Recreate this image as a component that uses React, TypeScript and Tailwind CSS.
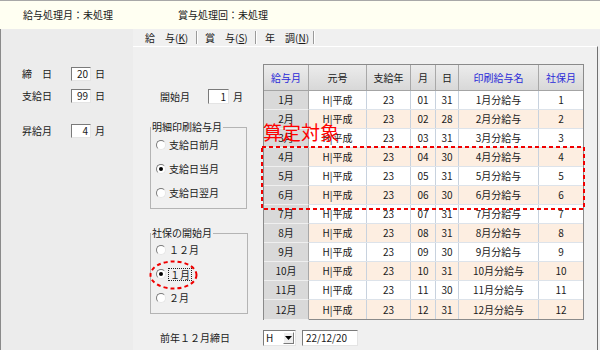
import React from "react";

const days = [31, 28, 31, 30, 31, 30, 31, 31, 30, 31, 30, 31];

function Field({ value, className }: { value: string; className: string }) {
  return (
    <div
      className={
        "h-[14px] bg-white border border-t-[#7a7a7a] border-l-[#7a7a7a] border-r-[#e4e4e4] border-b-[#e4e4e4] flex items-center justify-end pr-[2px] " +
        className
      }
    >
      {value}
    </div>
  );
}

function Radio({ label, checked, focus }: { label: string; checked?: boolean; focus?: boolean }) {
  return (
    <div className="flex items-center h-[16px] pl-[5px]">
      <span className="w-[10px] h-[10px] rounded-full bg-white border border-t-[#7a7a7a] border-l-[#7a7a7a] border-r-[#e6e6e6] border-b-[#e6e6e6] flex items-center justify-center">
        {checked && <span className="w-[4px] h-[4px] rounded-full bg-black" />}
      </span>
      {focus ? (
        <span className="ml-[2px] px-[1px] border border-dotted border-[#222] leading-[11px]">{label}</span>
      ) : (
        <span className="ml-[3px]">{label}</span>
      )}
    </div>
  );
}

function Tab({ a, b, k, className }: { a: string; b: string; k: string; className: string }) {
  return (
    <div className={"flex items-center h-full " + className}>
      <span>
        {a}　{b}(<span className="underline">{k}</span>)
      </span>
    </div>
  );
}

function Sep() {
  return <div className="w-[2px] h-[13px] border-l border-[#9a9a9a] border-r border-r-white" />;
}

export default function App() {
  return (
    <div className="relative w-[600px] h-[350px] overflow-hidden bg-[#f0f0f0] text-[10px] leading-[12px] text-[#1a1a1a] font-['Noto_Sans_CJK_JP',sans-serif]">
      {/* top info bar */}
      <div className="h-[29px] border-t border-[#a8a8a8] bg-[#fffff2] flex items-center">
        <span className="ml-[23px] w-[155px]">給与処理月：未処理</span>
        <span>賞与処理回：未処理</span>
      </div>

      <div className="flex h-[321px]">
        {/* left panel */}
        <div className="w-[133px] border-l border-[#8a8a8a] bg-[#ececec] flex flex-col pt-[38px]">
          <div className="flex items-center pl-[21px]">
            <span className="w-[49px]">締　日</span>
            <Field value="20" className="w-[20px]" />
            <span className="ml-[4px]">日</span>
          </div>
          <div className="flex items-center pl-[21px] mt-[8px]">
            <span className="w-[49px]">支給日</span>
            <Field value="99" className="w-[20px]" />
            <span className="ml-[4px]">日</span>
          </div>
          <div className="flex items-center pl-[21px] mt-[21px]">
            <span className="w-[49px]">昇給月</span>
            <Field value="4" className="w-[20px]" />
            <span className="ml-[4px]">月</span>
          </div>
        </div>

        {/* right tab area */}
        <div className="w-[467px] flex flex-col">
          <div className="h-[17px] flex items-center">
            <Tab a="給" b="与" k="K" className="w-[63px] pl-[12px]" />
            <Sep />
            <Tab a="賞" b="与" k="S" className="w-[57px] pl-[7px]" />
            <Sep />
            <Tab a="年" b="調" k="N" className="w-[56px] pl-[8px]" />
            <Sep />
          </div>
          <div className="w-[465px] h-[304px] border-t border-white border-r border-r-[#707070] flex flex-col">
            <div className="flex">
              {/* middle column */}
              <div className="w-[130px] flex flex-col">
                <div className="flex items-center h-[15px] mt-[42px] pl-[27px]">
                  <span className="w-[48px]">開始月</span>
                  <Field value="1" className="w-[21px] h-[15px]" />
                  <span className="ml-[4px]">月</span>
                </div>
                <fieldset className="mt-[17px] ml-[17px] w-[97px] border border-[#b4b4b4] pt-[4px] pb-[7px] flex flex-col gap-[8px]">
                  <legend className="px-[1px] leading-[12px]">明細印刷給与月</legend>
                  <Radio label="支給日前月" />
                  <Radio label="支給日当月" checked />
                  <Radio label="支給日翌月" />
                </fieldset>
                <fieldset className="mt-[18px] ml-[17px] w-[98px] border border-[#b4b4b4] pt-[3px] pb-[7px] flex flex-col gap-[8px]">
                  <legend className="px-[1px] leading-[12px]">社保の開始月</legend>
                  <Radio label="１２月" />
                  <Radio label="１月" checked focus />
                  <Radio label="２月" />
                </fieldset>
              </div>

              {/* table */}
              <div className="mt-[17px] w-[321px] border border-[#8a8a8a] flex flex-col">
                <div className="h-[26px] flex bg-gradient-to-b from-[#ececec] to-[#d8d8d8] border-b border-[#a4a4a4]">
                  <div className="w-[45px] border-r border-[#a8a8a8] flex items-center justify-center text-[#2a2ad8]">給与月</div>
                  <div className="w-[58px] border-r border-[#a8a8a8] flex items-center justify-center">元号</div>
                  <div className="w-[44px] border-r border-[#a8a8a8] flex items-center justify-center">支給年</div>
                  <div className="w-[25px] border-r border-[#a8a8a8] flex items-center justify-center">月</div>
                  <div className="w-[23px] border-r border-[#a8a8a8] flex items-center justify-center">日</div>
                  <div className="w-[80px] border-r border-[#a8a8a8] flex items-center justify-center text-[#2a2ad8]">印刷給与名</div>
                  <div className="w-[44px] flex items-center justify-center text-[#2a2ad8]">社保月</div>
                </div>
                {days.map((d, i) => {
                  const m = i + 1;
                  const even = m % 2 === 0;
                  const last = m === 12;
                  return (
                    <div
                      key={m}
                      className={
                        "h-[19px] flex " +
                        (even ? "bg-[#fdeee1] " : "bg-white ") +
                        (last ? "" : "border-b border-[#dde3ea]")
                      }
                    >
                      <div className="w-[45px] -mb-[1px] bg-[#d9d9d9] border-r border-[#a8a8a8] border-b border-b-[#efefef] flex items-center justify-center">
                        {m}月
                      </div>
                      <div className="w-[58px] border-r border-[#c8d2de] flex items-center justify-center">H|平成</div>
                      <div className="w-[44px] border-r border-[#c8d2de] flex items-center justify-center">23</div>
                      <div className="w-[25px] border-r border-[#c8d2de] flex items-center justify-center">
                        {String(m).padStart(2, "0")}
                      </div>
                      <div className="w-[23px] border-r border-[#c8d2de] flex items-center justify-center">{d}</div>
                      <div className="w-[80px] border-r border-[#c8d2de] flex items-center justify-center">{m}月分給与</div>
                      <div className="w-[44px] flex items-center justify-center">{m}</div>
                    </div>
                  );
                })}
              </div>
            </div>

            {/* bottom row */}
            <div className="mt-[10px] h-[16px] flex items-center">
              <span className="w-[130px] pl-[27px]">前年１２月締日</span>
              <div className="w-[33px] h-[16px] bg-white border border-t-[#7a7a7a] border-l-[#7a7a7a] border-r-[#e4e4e4] border-b-[#e4e4e4] flex items-center justify-between">
                <span className="pl-[2px]">H</span>
                <span className="w-[11px] h-[12px] mr-[1px] bg-[#eeeeee] border border-t-white border-l-white border-r-[#7a7a7a] border-b-[#7a7a7a] flex items-center justify-center">
                  <svg width="7" height="4" viewBox="0 0 7 4">
                    <path d="M0 0 H7 L3.5 4 Z" fill="#000" />
                  </svg>
                </span>
              </div>
              <div className="ml-[6px] w-[56px] h-[16px] bg-white border border-t-[#7a7a7a] border-l-[#7a7a7a] border-r-[#e4e4e4] border-b-[#e4e4e4] flex items-center pl-[3px]">
                22/12/20
              </div>
            </div>
          </div>
        </div>
      </div>

      {/* red annotations */}
      <div className="absolute left-[263px] top-[122px] text-[19px] leading-[20px] text-[#ff0000]">算定対象</div>
      <svg className="absolute left-0 top-0" width="600" height="350" viewBox="0 0 600 350">
        <rect x="262" y="147" width="322" height="62" fill="none" stroke="#f00000" strokeWidth="2" strokeDasharray="4 3" />
        <ellipse cx="173.5" cy="275" rx="23" ry="13.5" fill="none" stroke="#f00000" strokeWidth="2" strokeDasharray="4 3" />
      </svg>
    </div>
  );
}
